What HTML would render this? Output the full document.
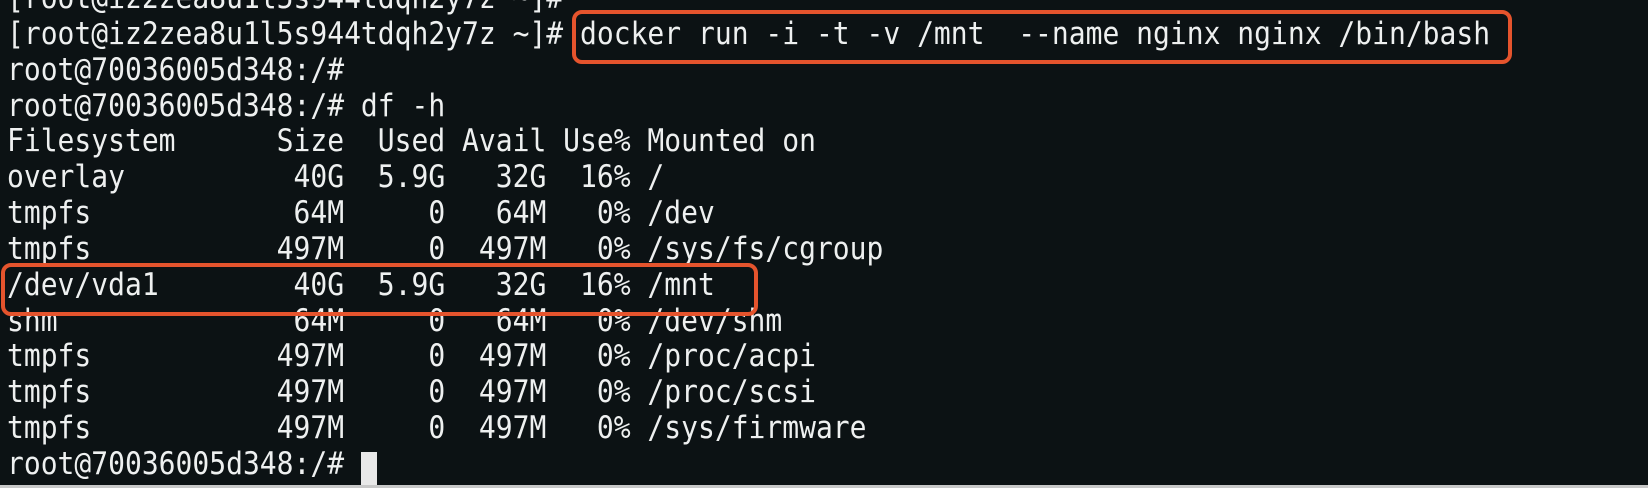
<!DOCTYPE html>
<html><head><style>
html,body{margin:0;padding:0;width:1648px;height:488px;overflow:hidden;background:#0c1214;}
pre{position:absolute;left:7px;top:-19px;margin:0;font-family:"DejaVu Sans Mono","Liberation Mono",monospace;font-size:31px;letter-spacing:0px;line-height:35.85px;color:#eef0f0;transform:scaleX(0.903);transform-origin:0 0;}
.box{position:absolute;border:4px solid #e5542d;border-radius:10px;}
.cur{position:absolute;left:361px;top:452px;width:16px;height:33px;background:#e8e8e8;}
.bot{position:absolute;left:0;top:485px;width:1648px;height:3px;background:#c8c8c8;}
</style></head><body>
<pre>[root@iz2zea8u1l5s944tdqh2y7z ~]#
[root@iz2zea8u1l5s944tdqh2y7z ~]# docker run -i -t -v /mnt  --name nginx nginx /bin/bash
root@70036005d348:/#
root@70036005d348:/# df -h
Filesystem      Size  Used Avail Use% Mounted on
overlay          40G  5.9G   32G  16% /
tmpfs            64M     0   64M   0% /dev
tmpfs           497M     0  497M   0% /sys/fs/cgroup
/dev/vda1        40G  5.9G   32G  16% /mnt
shm              64M     0   64M   0% /dev/shm
tmpfs           497M     0  497M   0% /proc/acpi
tmpfs           497M     0  497M   0% /proc/scsi
tmpfs           497M     0  497M   0% /sys/firmware
root@70036005d348:/# </pre>
<div class="box" style="left:572px;top:10px;width:932px;height:46px;"></div>
<div class="box" style="left:1px;top:263px;width:749px;height:45px;"></div>
<div class="cur"></div>
<div class="bot"></div>
</body></html>
